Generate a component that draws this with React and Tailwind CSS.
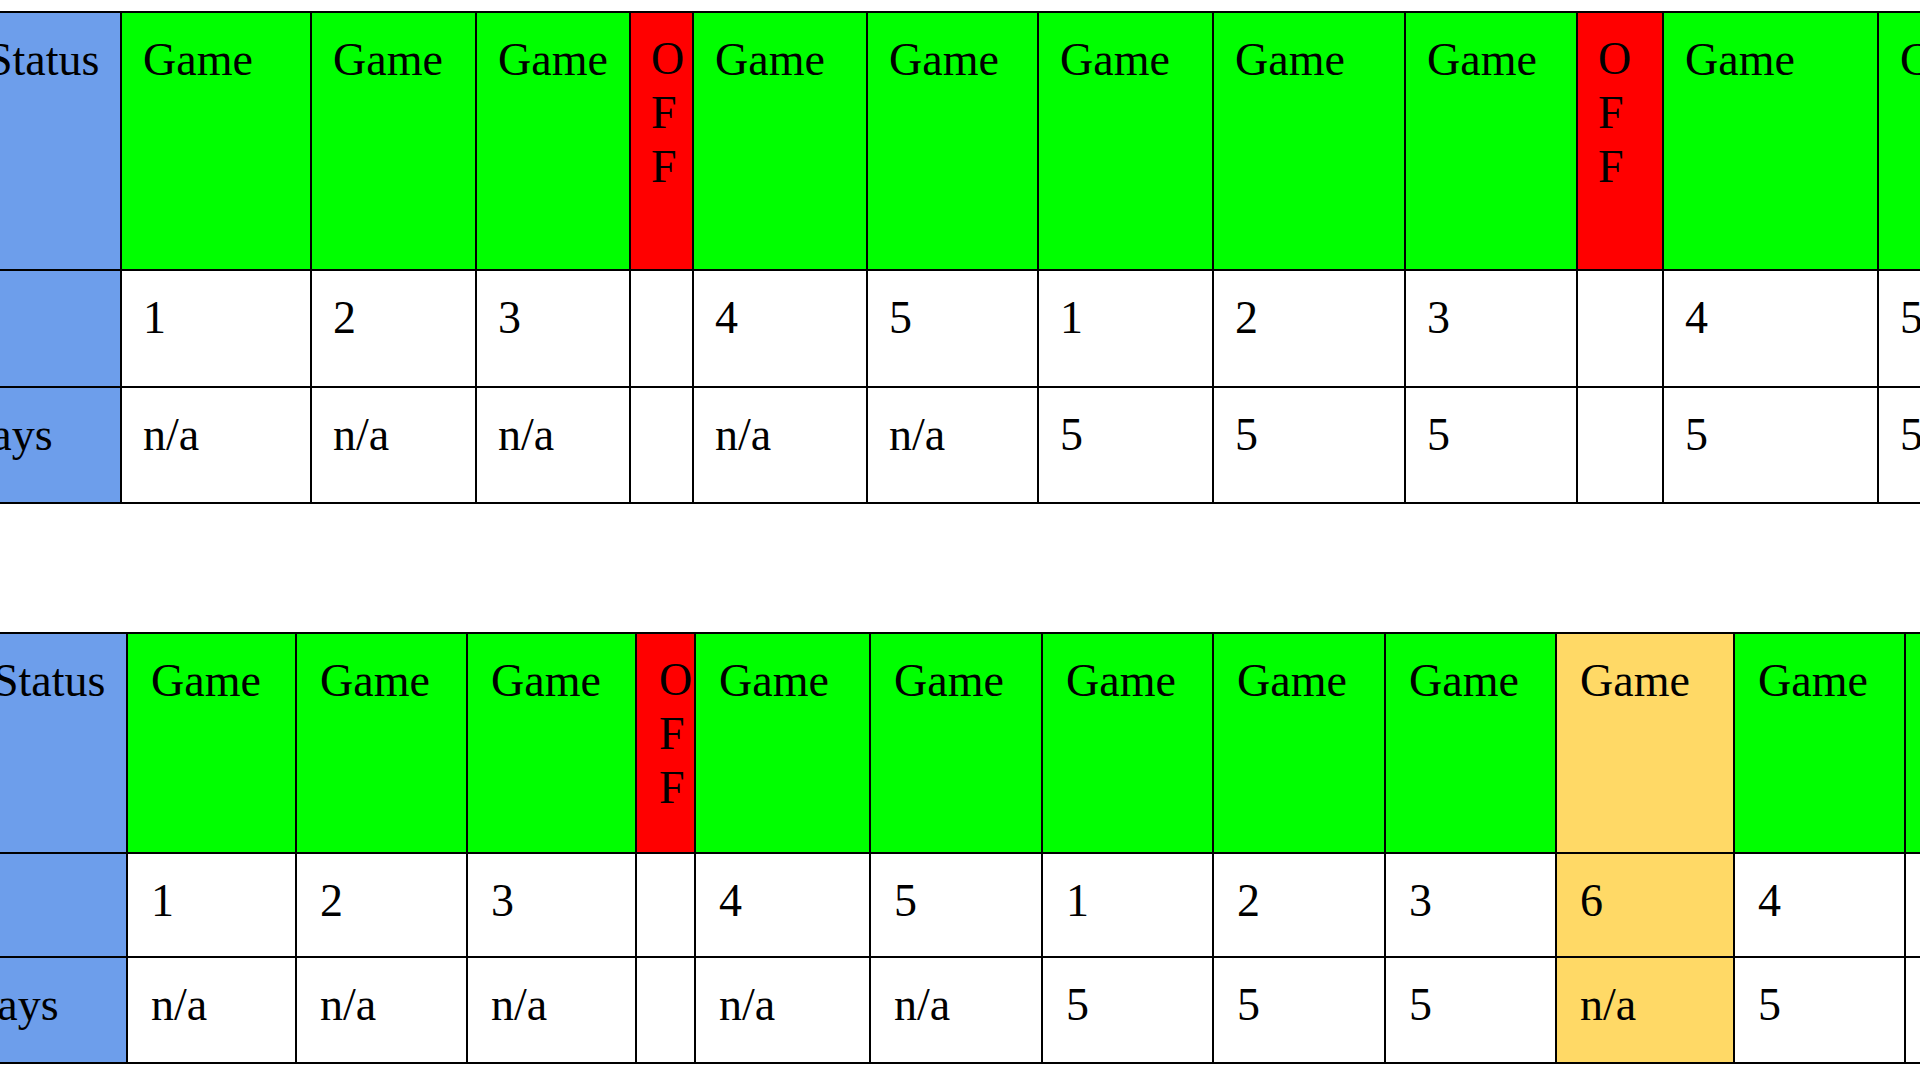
import React from "react";

const COLORS = {
  label: "bg-[#6d9eeb]",
  game: "bg-[#00ff00]",
  off: "bg-[#ff0000]",
  extra: "bg-[#ffd966]",
  plain: "bg-white",
};

// column widths are grid-line to grid-line, read off the screenshot
const tableOne = {
  table: "-ml-[36px] w-[2115px]",
  widths: [
    "w-[156px]", "w-[190px]", "w-[165px]", "w-[154px]", "w-[63px]", "w-[174px]", "w-[171px]",
    "w-[175px]", "w-[192px]", "w-[172px]", "w-[86px]", "w-[215px]", "w-[200px]",
  ],
  rows: ["h-[258px]", "h-[117px]", "h-[116px]"],
  pad: "pl-[21px]",
  cols: [
    { kind: "label" },
    { kind: "game", a: "1", b: "n/a" },
    { kind: "game", a: "2", b: "n/a" },
    { kind: "game", a: "3", b: "n/a" },
    { kind: "off" },
    { kind: "game", a: "4", b: "n/a" },
    { kind: "game", a: "5", b: "n/a" },
    { kind: "game", a: "1", b: "5" },
    { kind: "game", a: "2", b: "5" },
    { kind: "game", a: "3", b: "5" },
    { kind: "off" },
    { kind: "game", a: "4", b: "5" },
    { kind: "game", a: "5", b: "5" },
  ],
};

const tableTwo = {
  table: "-ml-[32px] w-[2136px]",
  widths: [
    "w-[158px]", "w-[169px]", "w-[171px]", "w-[169px]", "w-[59px]", "w-[175px]", "w-[172px]",
    "w-[171px]", "w-[172px]", "w-[171px]", "w-[178px]", "w-[171px]", "w-[200px]",
  ],
  rows: ["h-[220px]", "h-[104px]", "h-[106px]"],
  pad: "pl-[23px]",
  cols: [
    { kind: "label" },
    { kind: "game", a: "1", b: "n/a" },
    { kind: "game", a: "2", b: "n/a" },
    { kind: "game", a: "3", b: "n/a" },
    { kind: "off" },
    { kind: "game", a: "4", b: "n/a" },
    { kind: "game", a: "5", b: "n/a" },
    { kind: "game", a: "1", b: "5" },
    { kind: "game", a: "2", b: "5" },
    { kind: "game", a: "3", b: "5" },
    { kind: "extra", a: "6", b: "n/a" },
    { kind: "game", a: "4", b: "5" },
    { kind: "game", a: "5", b: "5" },
  ],
};

function Cell({ bg, pad, children }) {
  return (
    <td
      className={`${bg} ${pad} border-2 border-black pt-[20px] pr-1 align-top whitespace-nowrap font-[family-name:'Liberation_Serif','Times_New_Roman',serif] text-[46px] leading-[54px] text-black`}
    >
      {children}
    </td>
  );
}

function OffLetters() {
  return (
    <div className="flex flex-col -ml-[1px] -mt-[1px]">
      <span>O</span>
      <span>F</span>
      <span>F</span>
    </div>
  );
}

function Schedule({ data }) {
  const { table, widths, rows, pad, cols } = data;

  return (
    <table className={`${table} table-fixed border-collapse`}>
      <colgroup>
        {widths.map((w, i) => (
          <col key={i} className={w} />
        ))}
      </colgroup>
      <tbody>
        <tr className={rows[0]}>
          {cols.map((c, i) => {
            if (c.kind === "label")
              return <Cell key={i} bg={COLORS.label} pad={pad}>Status</Cell>;
            if (c.kind === "off")
              return (
                <Cell key={i} bg={COLORS.off} pad={pad}>
                  <OffLetters />
                </Cell>
              );
            return (
              <Cell key={i} bg={COLORS[c.kind]} pad={pad}>
                Game
              </Cell>
            );
          })}
        </tr>
        <tr className={rows[1]}>
          {cols.map((c, i) => {
            if (c.kind === "label")
              return <Cell key={i} bg={COLORS.label} pad={pad}>{""}</Cell>;
            if (c.kind === "off")
              return <Cell key={i} bg={COLORS.plain} pad={pad}>{""}</Cell>;
            return (
              <Cell key={i} bg={c.kind === "extra" ? COLORS.extra : COLORS.plain} pad={pad}>
                {c.a}
              </Cell>
            );
          })}
        </tr>
        <tr className={rows[2]}>
          {cols.map((c, i) => {
            if (c.kind === "label")
              return (
                <Cell key={i} bg={COLORS.label} pad={pad}>
                  <span className="-ml-[29px]">Days</span>
                </Cell>
              );
            if (c.kind === "off")
              return <Cell key={i} bg={COLORS.plain} pad={pad}>{""}</Cell>;
            return (
              <Cell key={i} bg={c.kind === "extra" ? COLORS.extra : COLORS.plain} pad={pad}>
                {c.b}
              </Cell>
            );
          })}
        </tr>
      </tbody>
    </table>
  );
}

export default function App() {
  return (
    <div className="h-[1080px] w-[1920px] overflow-hidden bg-white pt-[11px] font-[family-name:'Liberation_Serif','Times_New_Roman',serif] text-black">
      <Schedule data={tableOne} />
      <div className="h-[128px]" />
      <Schedule data={tableTwo} />
    </div>
  );
}
